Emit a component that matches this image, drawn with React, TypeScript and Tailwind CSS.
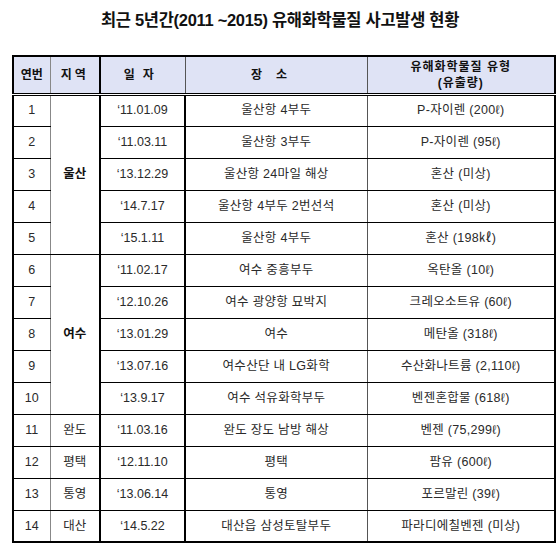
import React from 'react';

type Row = { no: number; date: string; place: string; chem: string };

const ulsan: Row[] = [
  { no: 1, date: '‘11.01.09', place: '울산항 4부두', chem: 'P-자이렌 (200ℓ)' },
  { no: 2, date: '‘11.03.11', place: '울산항 3부두', chem: 'P-자이렌 (95ℓ)' },
  { no: 3, date: '‘13.12.29', place: '울산항 24마일 해상', chem: '혼산 (미상)' },
  { no: 4, date: '‘14.7.17', place: '울산항 4부두 2번선석', chem: '혼산 (미상)' },
  { no: 5, date: '‘15.1.11', place: '울산항 4부두', chem: '혼산 (198㎘)' },
];

const yeosu: Row[] = [
  { no: 6, date: '‘11.02.17', place: '여수 중흥부두', chem: '옥탄올 (10ℓ)' },
  { no: 7, date: '‘12.10.26', place: '여수 광양항 묘박지', chem: '크레오소트유 (60ℓ)' },
  { no: 8, date: '‘13.01.29', place: '여수', chem: '메탄올 (318ℓ)' },
  { no: 9, date: '‘13.07.16', place: '여수산단 내 LG화학', chem: '수산화나트륨 (2,110ℓ)' },
  { no: 10, date: '‘13.9.17', place: '여수 석유화학부두', chem: '벤젠혼합물 (618ℓ)' },
];

const others: (Row & { region: string })[] = [
  { no: 11, region: '완도', date: '‘11.03.16', place: '완도 장도 남방 해상', chem: '벤젠 (75,299ℓ)' },
  { no: 12, region: '평택', date: '‘12.11.10', place: '평택', chem: '팜유 (600ℓ)' },
  { no: 13, region: '통영', date: '‘13.06.14', place: '통영', chem: '포르말린 (39ℓ)' },
  { no: 14, region: '대산', date: '‘14.5.22', place: '대산읍 삼성토탈부두', chem: '파라디에칠벤젠 (미상)' },
];

const td = 'border-b border-black text-center align-middle p-0';

const Cells = ({ r }: { r: Row }) => (
  <>
    <td className={`${td} border-r-2 border-r-black`}>{r.date}</td>
    <td className={`${td} border-r border-r-[#555] tracking-[0.3px]`}>{r.place}</td>
    <td className={`${td} tracking-[0.3px]`}>{r.chem}</td>
  </>
);

const Group = ({ rows, region }: { rows: Row[]; region: string }) => (
  <>
    {rows.map((r, i) => (
      <tr key={r.no} className="h-[32px]">
        <td className={`${td} border-r border-r-[#888]`}>{r.no}</td>
        {i === 0 && (
          <td rowSpan={rows.length} className={`${td} border-r-2 border-r-black font-bold text-[#111]`}>
            {region}
          </td>
        )}
        <Cells r={r} />
      </tr>
    ))}
  </>
);

export default function App() {
  return (
    <div className="w-[560px] h-[548px] bg-white text-[#2a2a2a]" style={{ fontFamily: '"Liberation Sans", "Noto Sans CJK KR", sans-serif' }}>
      <h1 className="pt-[8px] h-[55px] text-center text-[16.5px] font-bold tracking-[-0.3px] text-[#111]">
        최근 5년간(2011 ~2015) 유해화학물질 사고발생 현황
      </h1>
      <div className="pl-[12px]">
        <table className="w-[542px] border-collapse border-2 border-black table-fixed text-[12.5px] leading-none">
          <colgroup>
            <col className="w-[37px]" />
            <col className="w-[50px]" />
            <col className="w-[85px]" />
            <col className="w-[182px]" />
            <col className="w-[188px]" />
          </colgroup>
          <thead>
            <tr className="h-[38px] bg-[#dfe3f5] font-bold text-[#111] text-[12px]">
              <th className="border-b-[3px] border-double border-b-black border-r border-r-[#888]">연번</th>
              <th className="border-b-[3px] border-double border-b-black border-r-2 border-r-black tracking-[3px]">지역</th>
              <th className="border-b-[3px] border-double border-b-black border-r border-r-[#555] tracking-[8px]">일자</th>
              <th className="border-b-[3px] border-double border-b-black border-r border-r-[#555] tracking-[14px]">장소</th>
              <th className="border-b-[3px] border-double border-b-black leading-[16px] tracking-[1px]">
                유해화학물질 유형
                <br />
                (유출량)
              </th>
            </tr>
          </thead>
          <tbody>
            <Group rows={ulsan} region="울산" />
            <Group rows={yeosu} region="여수" />
            {others.map(r => (
              <tr key={r.no} className="h-[32px]">
                <td className={`${td} border-r border-r-[#888]`}>{r.no}</td>
                <td className={`${td} border-r-2 border-r-black`}>{r.region}</td>
                <Cells r={r} />
              </tr>
            ))}
          </tbody>
        </table>
      </div>
    </div>
  );
}
